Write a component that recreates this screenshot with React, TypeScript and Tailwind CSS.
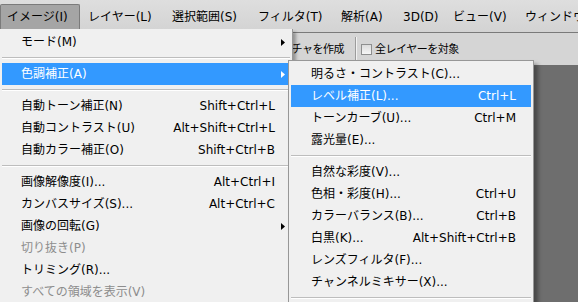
import React from "react";

type Item = { t: string; k?: string; arrow?: boolean; active?: boolean; disabled?: boolean } | "sep";

const mainItems: Item[] = [
  { t: "モード(M)", arrow: true },
  "sep",
  { t: "色調補正(A)", arrow: true, active: true },
  "sep",
  { t: "自動トーン補正(N)", k: "Shift+Ctrl+L" },
  { t: "自動コントラスト(U)", k: "Alt+Shift+Ctrl+L" },
  { t: "自動カラー補正(O)", k: "Shift+Ctrl+B" },
  "sep",
  { t: "画像解像度(I)...", k: "Alt+Ctrl+I" },
  { t: "カンバスサイズ(S)...", k: "Alt+Ctrl+C" },
  { t: "画像の回転(G)", arrow: true },
  { t: "切り抜き(P)", disabled: true },
  { t: "トリミング(R)..." },
  { t: "すべての領域を表示(V)", disabled: true },
];

const subItems: Item[] = [
  { t: "明るさ・コントラスト(C)..." },
  { t: "レベル補正(L)...", k: "Ctrl+L", active: true },
  { t: "トーンカーブ(U)...", k: "Ctrl+M" },
  { t: "露光量(E)..." },
  "sep",
  { t: "自然な彩度(V)..." },
  { t: "色相・彩度(H)...", k: "Ctrl+U" },
  { t: "カラーバランス(B)...", k: "Ctrl+B" },
  { t: "白黒(K)...", k: "Alt+Shift+Ctrl+B" },
  { t: "レンズフィルタ(F)..." },
  { t: "チャンネルミキサー(X)..." },
  "sep",
];

const menubar = [
  { t: "レイヤー(L)", w: "w-[84px]" },
  { t: "選択範囲(S)", w: "w-[86px]" },
  { t: "フィルタ(T)", w: "w-[83px]" },
  { t: "解析(A)", w: "w-[62px]" },
  { t: "3D(D)", w: "w-[50px]" },
  { t: "ビュー(V)", w: "w-[72px]" },
  { t: "ウィンドウ(W)", w: "w-[90px]" },
];

function Arrow({ white }: { white?: boolean }) {
  return (
    <svg width="4" height="7" viewBox="0 0 4 7" className="absolute right-[5px] top-[8px]">
      <polygon points="0,0 4,3.5 0,7" fill={white ? "#ffffff" : "#000000"} />
    </svg>
  );
}

function MenuList({ items, pl }: { items: Item[]; pl: string }) {
  return (
    <>
      {items.map((it, i) =>
        it === "sep" ? (
          <div key={i} className="h-[10px] flex flex-col justify-center">
            <div className="h-px bg-[#bdbdbd]" />
            <div className="h-px bg-white" />
          </div>
        ) : (
          <div
            key={i}
            className={
              "relative h-[22px] flex items-center justify-between pr-[15px] " +
              pl +
              (it.active ? " bg-[#3399ff] text-white" : it.disabled ? " text-[#8d8d8d]" : " text-black")
            }
          >
            <span>{it.t}</span>
            {it.k && <span>{it.k}</span>}
            {it.arrow && <Arrow white={it.active} />}
          </div>
        )
      )}
    </>
  );
}

export default function App() {
  return (
    <div className="relative w-[578px] h-[302px] overflow-hidden bg-[#6e6e6e] text-[12px] leading-none font-['DejaVu_Sans','Noto_Sans_CJK_JP',sans-serif]">
      {/* menubar */}
      <div className="h-[33px] flex bg-gradient-to-b from-[#dedede] to-[#d3d3d3] border-b border-[#7a7a7a]">
        <div className="w-[80px] shrink-0 mt-[4px] h-[26px] bg-[#a5a5a5] border border-b-0 border-[#7b7b7b] rounded-t-[2px] flex items-center pl-[6px] pb-[2px] text-black">
          イメージ(I)
        </div>
        <div className="flex items-center pl-[8px] pt-[1px] text-black">
          {menubar.map((m) => (
            <div key={m.t} className={m.w + " shrink-0 whitespace-nowrap"}>
              {m.t}
            </div>
          ))}
        </div>
      </div>
      {/* options bar */}
      <div className="h-[32px] bg-[#d5d5d5] flex items-center text-[11px] tracking-[-0.5px] text-black">
        <div className="w-[344px] shrink-0 text-right whitespace-nowrap">テクスチャを作成</div>
        <div className="ml-[11px] flex h-[25px]">
          <div className="w-px bg-[#9c9c9c]" />
          <div className="w-px bg-[#f2f2f2]" />
        </div>
        <div className="ml-[4px] w-[11px] h-[11px] border border-[#8e8f8f] bg-gradient-to-b from-[#dcdcdc] to-[#f6f6f6]" />
        <div className="ml-[3px] whitespace-nowrap">全レイヤーを対象</div>
      </div>

      {/* image menu */}
      <div className="absolute left-0 top-[29px] w-[293px] bg-[#f0f0f0] border-r border-[#979797] py-[2px] px-[2px] shadow-[3px_3px_3px_rgba(0,0,0,0.3)]">
        <MenuList items={mainItems} pl="pl-[19px]" />
      </div>

      {/* adjustments submenu */}
      <div className="absolute left-[288px] top-[60px] w-[246px] bg-[#f0f0f0] border border-[#979797] p-[2px] shadow-[4px_4px_4px_rgba(0,0,0,0.35)]">
        <MenuList items={subItems} pl="pl-[20px]" />
      </div>
    </div>
  );
}
